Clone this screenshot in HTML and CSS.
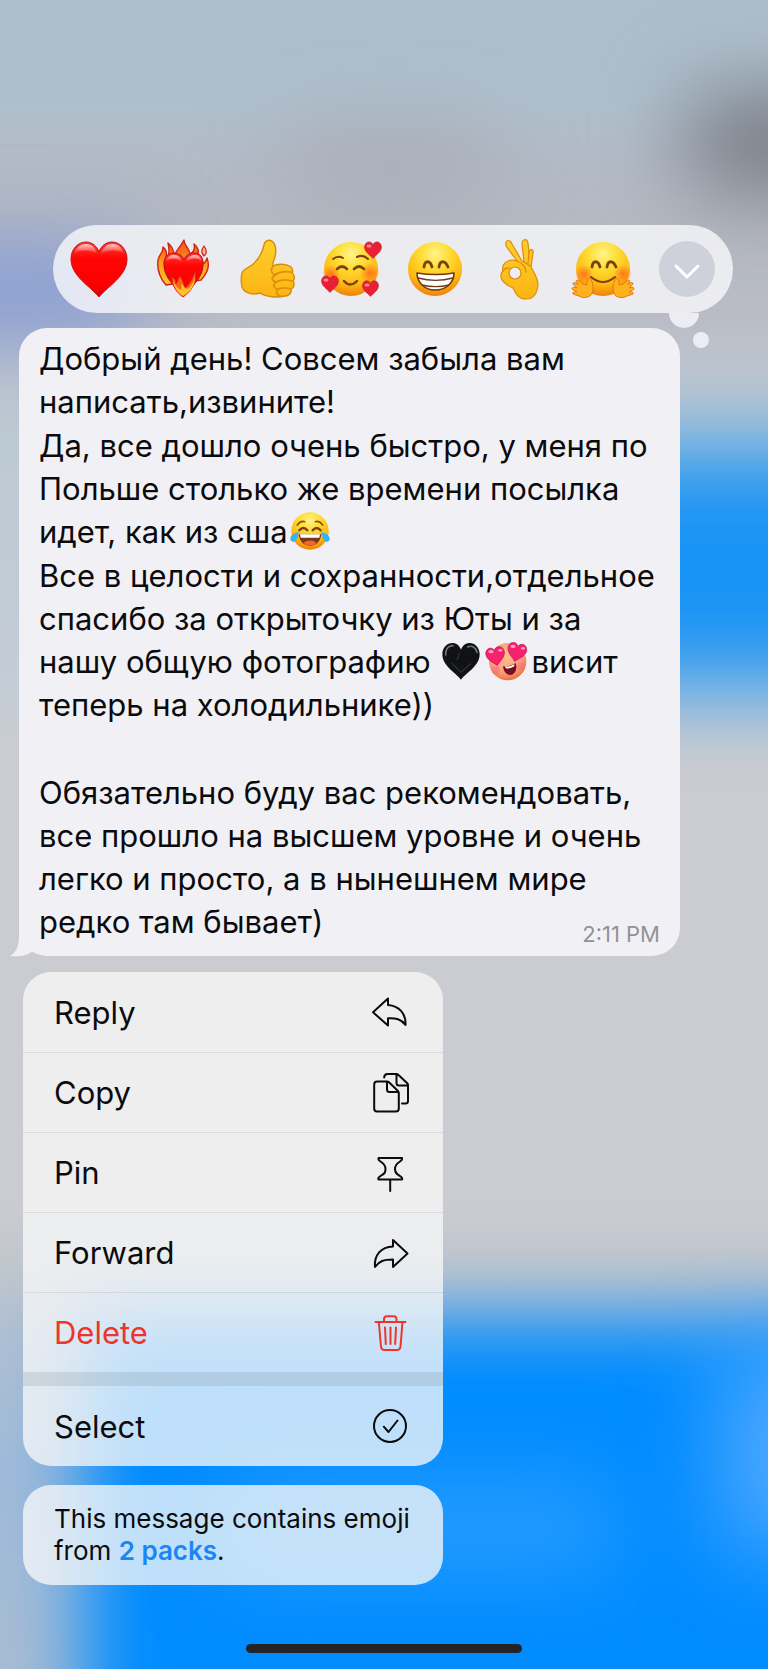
FILE: index.html
```html
<!DOCTYPE html>
<html lang="ru">
<head>
<meta charset="utf-8">
<meta name="viewport" content="width=device-width, initial-scale=1">
<title>Message actions</title>
<link rel="stylesheet" href="styles.css">
</head>
<body>
<svg class="defs" width="0" height="0" aria-hidden="true">
  <defs>
    <radialGradient id="face" cx="50%" cy="22%" r="80%">
      <stop offset="0" stop-color="#fff48a"/><stop offset=".35" stop-color="#ffdc33"/><stop offset=".72" stop-color="#fdb812"/><stop offset="1" stop-color="#ee7a0a"/>
    </radialGradient>
    <radialGradient id="blush"><stop offset="0" stop-color="#ff5a1e" stop-opacity=".75"/><stop offset="1" stop-color="#ff5a1e" stop-opacity="0"/></radialGradient>
    <linearGradient id="hand" x1="0" y1="0" x2="0" y2="1"><stop offset="0" stop-color="#ffd02c"/><stop offset="1" stop-color="#fbb413"/></linearGradient>
    <linearGradient id="red" x1="0" y1="0" x2="0" y2="1"><stop offset="0" stop-color="#ff3b35"/><stop offset=".3" stop-color="#ff0503"/><stop offset=".8" stop-color="#fb0000"/><stop offset="1" stop-color="#d50508"/></linearGradient>
    <linearGradient id="gloss" x1="0" y1="0" x2="0" y2="1"><stop offset="0" stop-color="#fff" stop-opacity=".75"/><stop offset="1" stop-color="#fff" stop-opacity="0"/></linearGradient>
    <linearGradient id="flame" x1="0" y1="0" x2="0" y2="1"><stop offset="0" stop-color="#f2491b"/><stop offset=".5" stop-color="#ff9b1d"/><stop offset="1" stop-color="#ffc928"/></linearGradient>
    <radialGradient id="pinkface" cx="45%" cy="35%" r="65%"><stop offset="0" stop-color="#ffc18c"/><stop offset=".7" stop-color="#fb9a7b"/><stop offset="1" stop-color="#e8743f"/></radialGradient>
    <symbol id="heart" viewBox="0 0 60 60">
      <path d="M30 58C21 47 2 37 2 20C2 10 9 3 17 3C23 3 28 7 30 13C32 7 37 3 43 3C51 3 58 10 58 20C58 37 39 47 30 58Z"/>
    </symbol>
  </defs>
</svg>

<main class="screen">
  <div class="backdrop" aria-hidden="true">
    <span class="blob sent-top"></span>
    <span class="blob sent-bottom"></span>
    <span class="blob glow-center"></span>
    <span class="blob glow-right"></span>
    <span class="blob shade-right"></span>
    <span class="blob shade-center"></span>
    <span class="blob tint-left"></span>
  </div>

  <div class="reactions">
    <button class="reaction" type="button" aria-label="Red heart">
      <svg class="emoji" viewBox="0 0 60 60">
        <path d="M30 58C21 47 2 37 2 20C2 10 9 3 17 3C23 3 28 7 30 13C32 7 37 3 43 3C51 3 58 10 58 20C58 37 39 47 30 58Z" fill="url(#red)" stroke="#c9151c" stroke-width="1"/>
        <path d="M5 15C7 8 12 5 17 5C23 5 27 9 28 15C22 11 12 10 5 15Z" fill="url(#gloss)"/>
        <path d="M32 15C33 9 38 5 43 5C49 5 53 8 55 15C48 10 38 11 32 15Z" fill="url(#gloss)"/>
      </svg>
    </button>
    <button class="reaction" type="button" aria-label="Heart on fire">
      <svg class="emoji" viewBox="0 0 60 60">
        <path d="M13 46C6 38 4 29 5 21C6 15 10 15 10 8C14 11 14 14 13 18C16 17 17 13 15 4C20 8 21 12 21 17C23 12 27 8 31 1C31 7 36 8 37 15C41 13 42 9 41 5C46 9 46 14 44 18C47 19 48 22 48 26C51 25 53 23 54 19C57 27 55 33 48 41Z" fill="url(#flame)" stroke="#ce2419" stroke-width="1.4" stroke-linejoin="round"/>
        <path d="M51 7C54 11 54 15 51 17C48 14 48 11 51 7Z" fill="#ffb09a" stroke="#ce2419" stroke-width="1.2"/>
        <path d="M30 58C24 48 12 41 11 27C10 19 15 14 20 14C26 14 30 17 31 21C32 17 36 14 42 14C48 14 51 20 50 27C49 41 37 48 30 58Z" fill="url(#red)" stroke="#b9131a" stroke-width="1"/>
        <path d="M13 22C15 17 18 16 21 16C26 16 28 19 29 23C24 19 18 19 13 22ZM33 23C34 18 38 16 42 16C46 16 48 19 49 22C43 18 38 19 33 23Z" fill="url(#gloss)"/>
        <path d="M30 58C25 54 19 49 19 38C22 40 23 42 23 45C25 43 25 40 27 37C30 41 30 45 32 49C36 46 39 41 42 33C44 41 41 50 30 58Z" fill="#f8661b" stroke="#df2b18" stroke-width="1"/>
        <path d="M30 57C24 53 21 48 20 42C23 48 26 50 28 51C29 49 28 46 29 44C31 49 33 51 36 49C39 46 41 42 42 38C42 46 38 52 30 57Z" fill="#ffc22d"/>
      </svg>
    </button>
    <button class="reaction" type="button" aria-label="Thumbs up">
      <svg class="emoji" viewBox="0 0 60 60">
        <path d="M5 34C6 30 11 29 15 26C20 22 25 15 27 6C28 1 33 0 36 3C40 7 39 13 38 18C37 21 35 25 36 27C41 24 50 25 54 28C56 30 56 33 55 34C58 36 58 40 56 42C58 45 57 49 54 50C55 54 52 57 48 57C40 59 29 58 23 54C16 56 8 55 5 48C4 43 4 38 5 34Z" fill="url(#hand)" stroke="#d98b08" stroke-width="1.4" stroke-linejoin="round"/>
        <path d="M36 27C33 31 34 35 39 36M54 33C48 32 40 33 37 37C34 39 35 42 39 43M55 42C49 40 41 41 38 44C35 47 38 50 41 50M54 50C48 48 41 49 40 52C39 55 41 57 44 57" fill="none" stroke="#dd8e0a" stroke-width="1.6" stroke-linecap="round"/>
      </svg>
    </button>
    <button class="reaction" type="button" aria-label="Smiling face with hearts">
      <svg class="emoji" viewBox="0 0 60 60">
        <circle cx="30" cy="30" r="27" fill="url(#face)"/>
        <circle cx="10" cy="35" r="9" fill="url(#blush)"/><circle cx="49" cy="34" r="10" fill="url(#blush)"/>
        <g fill="none" stroke="#7c4210" stroke-linecap="round">
          <path d="M12 20Q17 16 22 19M36 18Q42 15 47 20" stroke-width="2"/>
          <path d="M16 30Q21 25 26 30M33 30Q38 25 43 30" stroke-width="2.6"/>
          <path d="M23 42Q29 49 36 42" stroke-width="2.4"/>
        </g>
        <g fill="#ea1f35" stroke="#b3122a" stroke-width="2">
          <use href="#heart" x="43" y="2" width="18" height="18"/>
          <use href="#heart" x="0" y="36" width="18" height="18"/>
          <use href="#heart" x="41" y="41" width="17" height="17"/>
        </g>
        <g fill="#ff8790"><ellipse cx="48" cy="7" rx="2.5" ry="1.5"/><ellipse cx="5" cy="41" rx="2.5" ry="1.5"/><ellipse cx="46" cy="46" rx="2.5" ry="1.5"/></g>
      </svg>
    </button>
    <button class="reaction" type="button" aria-label="Grinning face with smiling eyes">
      <svg class="emoji" viewBox="0 0 60 60">
        <circle cx="30" cy="30" r="27" fill="url(#face)"/>
        <path d="M19 28C20 21 25 21 27 28M34 28C35 21 40 21 43 28" fill="none" stroke="#7c4210" stroke-width="2.8" stroke-linecap="round"/>
        <path d="M12 34C24 36 37 36 49 34C49 44 41 51 30 51C20 51 12 44 12 34Z" fill="#fff" stroke="#6e3a12" stroke-width="1.6" stroke-linejoin="round"/>
        <path d="M13 39C24 42 37 42 48 39M17 46C25 48 36 48 44 46" fill="none" stroke="#6e3a12" stroke-width="1.3"/>
      </svg>
    </button>
    <button class="reaction" type="button" aria-label="OK hand">
      <svg class="emoji" viewBox="0 0 60 60">
        <path d="M17 3C19 0 22 2 23 5L33 22L35 23L33 5C33 0 38 -1 39 4L40 14C41 9 45 10 44 14L42 28C45 34 49 39 49 46C48 55 45 60 37 60C29 60 27 55 24 49C17 46 11 41 12 36C12 34 13 33 14 32C12 24 20 19 28 22L17 7Z" fill="url(#hand)" stroke="#e08a0a" stroke-width="1.2" stroke-linejoin="round"/>
        <circle cx="26" cy="34" r="6" fill="#edeef2" stroke="#e08a0a" stroke-width="1.2"/>
        <path d="M14 32C15 30 17 29 20 29M35 23L41 27M40 14L39 24M28 22C34 24 37 29 37 33" fill="none" stroke="#e08a0a" stroke-width="1.3" stroke-linecap="round"/>
      </svg>
    </button>
    <button class="reaction" type="button" aria-label="Hugging face">
      <svg class="emoji" viewBox="0 0 60 60">
        <circle cx="30" cy="30" r="27" fill="url(#face)"/>
        <circle cx="11" cy="35" r="9" fill="url(#blush)"/><circle cx="50" cy="35" r="9" fill="url(#blush)"/>
        <path d="M19 28C20 21 25 21 27 28M34 28C35 21 40 21 43 28" fill="none" stroke="#7c4210" stroke-width="2.8" stroke-linecap="round"/>
        <path d="M18 38Q30 48 42 38" fill="none" stroke="#7c4210" stroke-width="2" stroke-linecap="round"/>
        <g fill="#ffb21d" stroke="#e5780b" stroke-width="1" stroke-linejoin="round">
          <path id="hug" d="M17 57C13 59 9 59 6 57L0 55C-1 53 1 53 4 53L-1 50C-1 48 1 48 4 49L0 45C0 43 2 43 5 46L3 42C4 40 6 42 10 45L14 46C14 42 14 39 17 39C20 42 22 53 17 57Z"/>
          <use href="#hug" transform="matrix(-1 0 0 1 60 0)"/>
        </g>
      </svg>
    </button>
    <button class="reaction" type="button" aria-label="More reactions">
      <svg class="more" viewBox="0 0 56 56"><circle cx="28" cy="28" r="28" fill="#cfd1da"/><path d="M17 25L28 36L39 25" fill="none" stroke="#fff" stroke-width="3" stroke-linecap="round" stroke-linejoin="round"/></svg>
    </button>
    <span class="bubble-large"></span>
    <span class="bubble-small"></span>
  </div>

  <article class="message">
    <div class="message-text">
      <p>Добрый день! Совсем забыла вам<br>написать,извините!</p>
      <p>Да, все дошло очень быстро, у меня по<br>Польше столько же времени посылка<br>идет, как из сша<svg class="inline-emoji" viewBox="0 0 60 60" role="img" aria-label="Tears of joy">
        <circle cx="30" cy="30" r="28" fill="url(#face)"/>
        <path d="M11 21Q16 14 22 16M38 16Q44 14 49 21" fill="none" stroke="#85500f" stroke-width="2.500" stroke-linecap="round"/>
        <path d="M14 29Q20 22 26 29M34 29Q40 22 46 29" fill="none" stroke="#7c4210" stroke-width="3.500" stroke-linecap="round"/>
        <path d="M13 35H47C46 46 39 52 30 52S14 46 13 35Z" fill="#7a3814"/>
        <path d="M15 35H45L44 40H16Z" fill="#fff"/><path d="M20 48C25 43 35 43 40 48C34 53 26 53 20 48Z" fill="#f2652b"/>
        <path d="M13 31C3 34-1 39 1 44C4 49 12 46 13 31ZM47 31C57 34 61 39 59 44C56 49 48 46 47 31Z" fill="#35b4f2"/>
      </svg></p>
      <p>Все в целости и сохранности,отдельное<br>спасибо за открыточку из Юты и за<br>нашу общую фотографию <svg class="inline-emoji" viewBox="0 0 60 60" role="img" aria-label="Black heart">
        <use href="#heart" width="60" height="60" fill="#111214"/>
        <path d="M7 21C6 13 11 7 18 7M40 9C46 6 52 9 54 17" fill="none" stroke="#70757b" stroke-width="2.500" stroke-linecap="round"/>
        <path d="M16 33L30 47L44 34M28 18L24 28" fill="none" stroke="#2b2e33" stroke-width="2" stroke-linecap="round"/>
      </svg><svg class="inline-emoji wide" viewBox="0 0 66 60" role="img" aria-label="Heart eyes">
        <circle cx="34" cy="31" r="28" fill="url(#pinkface)"/>
        <circle cx="16" cy="44" r="6" fill="#f7667b" opacity=".5"/><circle cx="54" cy="38" r="6" fill="#f7667b" opacity=".5"/>
        <path d="M27 38Q38 39 46 33C49 43 45 50 38 51C32 51 28 46 27 38Z" fill="#74101e"/><path d="M30 38Q38 39 44 35L44 38Q38 42 31 41Z" fill="#fff"/>
        <g fill="#f7216e" stroke="#bd0e4e" stroke-width="2"><use href="#heart" x="1" y="8" width="30" height="30" transform="rotate(-10 16 23)"/><use href="#heart" x="31" y="2" width="33" height="30" transform="rotate(12 48 17)"/></g>
        <g fill="#ff9fc1"><ellipse cx="9" cy="16" rx="4" ry="2.500"/><ellipse cx="23" cy="14" rx="3" ry="2"/><ellipse cx="42" cy="8" rx="4" ry="2.500"/><ellipse cx="57" cy="11" rx="3" ry="2"/></g>
      </svg>висит<br>теперь на холодильнике))</p>
      <p><br></p>
      <p>Обязательно буду вас рекомендовать,<br>все прошло на высшем уровне и очень<br>легко и просто, а в нынешнем мире<br>редко там бывает)</p>
    </div>
    <time class="message-time">2:11 PM</time>
    <svg class="tail" viewBox="0 0 24 30" aria-hidden="true"><path d="M9 0V8C9 19 6 24 0 28C8 29 17 28 22 23.500L24 12Z" fill="#f1f1f5"/></svg>
  </article>

  <nav class="menu" aria-label="Message">
    <button class="item" type="button">Reply
      <svg class="icon" viewBox="0 0 40 40"><path d="M3 20.300L18 6.500V13C29 14 36 21 35.500 33C31 27 26 26 18 26.300V33.500Z"/></svg>
    </button>
    <button class="item" type="button">Copy
      <svg class="icon" viewBox="0 0 40 40"><path d="M17 8.500H7Q4.200 8.500 4.200 11.500V35.500Q4.200 38.500 7 38.500H26Q28.800 38.500 28.800 35.500V20Q28.800 19 28 18L19 9.300Q18 8.500 17 8.500V16.500Q17 19 19.500 19H28.500M14.200 4.500Q14.200 1 17.500 1H26.500Q27.500 1 28.500 2L37 10Q38 11 38 12V28Q38 30.500 35.500 30.500H32M26.500 1V10Q26.500 12.500 29 12.500H37.500"/></svg>
    </button>
    <button class="item" type="button">Pin
      <svg class="icon" viewBox="0 0 40 40"><path d="M8.500 5H32Q32.500 7 30 8.500C26 11 25 13 25 16C25 20 27 21 30 23Q33 25 32 26.500H8.500Q7.500 25 10.500 23C14 21 15.500 20 15.500 16C15.500 13 14.500 11 10.500 8.500Q8 7 8.500 5ZM20.200 26.500V38"/></svg>
    </button>
    <button class="item" type="button">Forward
      <svg class="icon" viewBox="0 0 40 40"><path d="M37.500 20.500L23 7V13.500C11 14 4 22 5 34C9 28 14 26.500 23 26.500V34Z"/></svg>
    </button>
    <button class="item danger" type="button">Delete
      <svg class="icon" viewBox="0 0 40 40"><path d="M5.500 9H35.500M14 8.500V6Q14 3.200 17 3.200H23.500Q26.500 3.200 26.500 6V8.500M8.800 9L11 33.500Q11.300 37 14.500 37H27Q30.200 37 30.500 33.500L32.500 9M15 14.500L15.800 31M20.500 14.500V31M26 14.500L25.200 31"/></svg>
    </button>
    <div class="divider"></div>
    <button class="item" type="button">Select
      <svg class="icon" viewBox="0 0 40 40"><circle cx="20" cy="20" r="16"/><path d="M13.800 20.700L18.500 26L27.500 14.500"/></svg>
    </button>
  </nav>

  <p class="note">This message contains emoji from <a href="#packs">2 packs</a>.</p>

  <div class="home-indicator"></div>
</main>
</body>
</html>
```
FILE: styles.css
```css
* {
  box-sizing: border-box;
}

body {
  margin: 0;
  font-family: Inter, "Noto Sans", sans-serif;
  font-size: 31px;
  color: #0b0b0d;
}

p {
  margin: 0;
}

button {
  border: 0;
  padding: 0;
  background: none;
  font: inherit;
  color: inherit;
  cursor: pointer;
}

.defs {
  position: absolute;
}

.screen {
  position: relative;
  z-index: 0;
  display: flex;
  flex-direction: column;
  align-items: flex-start;
  min-height: 100vh;
  padding: 225px 0 16px;
}

/* Blurred chat behind the open menu */
.backdrop {
  position: absolute;
  inset: 0;
  z-index: -1;
  overflow: hidden;
  background: linear-gradient(180deg, #adbecb 0, #aebfcc 6%, #b2bbc7 9%, #b5b9c2 13%, #b9bcc5 19%, #bec5ce 22%, #bccad2 26%, #c3ccd6 40%, #cbccd1 46%, #cbccd1 72%, #c0c6cd 76%, #aebfd2 80%, #9fbad9 88%, #a8bcd3 100%);
}

.blob {
  position: absolute;
  filter: blur(44px);
}

.sent-top {
  top: 27%;
  right: -20%;
  width: 70%;
  height: 14%;
  background: #1893f6;
}

.sent-bottom {
  top: 79%;
  right: -18%;
  bottom: -8%;
  left: 11%;
  background: #008cff;
  filter: blur(36px);
}

.glow-center {
  top: 89%;
  left: 30%;
  width: 50%;
  height: 5%;
  background: #2b9eff;
}

.glow-right {
  top: 81%;
  right: -14%;
  width: 20%;
  height: 12%;
  background: #4ea8ff;
}

.shade-right {
  top: 6%;
  right: -12%;
  width: 22%;
  height: 5%;
  background: #6d6e75;
}

.shade-center {
  top: 8%;
  left: 38%;
  width: 26%;
  height: 4%;
  background: #a7a9b3;
}

.tint-left {
  top: 15%;
  left: -14%;
  width: 32%;
  height: 5%;
  background: #7f98d8;
}

.reactions {
  position: relative;
  display: grid;
  grid-template-columns: repeat(8, 1fr);
  align-self: stretch;
  height: 88px;
  margin: 0 35px 0 53px;
  padding: 0 4px;
  border-radius: 44px;
  background: rgba(249, 249, 251, .8);
}

.reaction {
  display: grid;
  place-items: center;
}

.emoji {
  width: 60px;
  height: 60px;
  overflow: visible;
}

.more {
  width: 56px;
  height: 56px;
}

.bubble-large,
.bubble-small {
  position: absolute;
  background: #ebedf2;
}

.bubble-large {
  top: 88px;
  right: 34px;
  width: 30px;
  height: 15px;
  border-radius: 0 0 15px 15px;
}

.bubble-small {
  top: 107px;
  right: 24px;
  width: 16px;
  height: 16px;
  border-radius: 50%;
}

.message {
  position: relative;
  display: grid;
  align-self: stretch;
  margin: 15px 88px 0 19px;
  padding: 9px 20px 13px;
  border-radius: 28px;
  background: #f1f1f5;
}

.message-text,
.message-time {
  grid-area: 1 / 1;
}

.message-text {
  display: flex;
  flex-direction: column;
  gap: 1px;
  line-height: 43px;
}

.message-time {
  align-self: end;
  justify-self: end;
  font-size: 22px;
  line-height: 18px;
  color: #929296;
}

.inline-emoji {
  width: 40px;
  height: 40px;
  margin: 0 2px;
  vertical-align: -8px;
}

.inline-emoji.wide {
  width: 44px;
}

.tail {
  position: absolute;
  left: -9px;
  bottom: -2px;
  width: 24px;
  height: 30px;
}

.menu,
.note {
  width: calc(100% - 48px);
  max-width: 420px;
  margin-left: 23px;
  border-radius: 28px;
  background: rgba(249, 249, 249, .77);
}

.menu {
  display: flex;
  flex-direction: column;
  margin-top: 16px;
  overflow: hidden;
}

.item {
  display: flex;
  align-items: center;
  justify-content: space-between;
  height: 80px;
  padding: 0 33px 0 31px;
  text-align: left;
}

.item + .item {
  border-top: 1px solid rgba(60, 70, 90, .12);
}

.icon {
  width: 40px;
  height: 40px;
  fill: none;
  stroke: currentColor;
  stroke-width: 2;
  stroke-linecap: round;
  stroke-linejoin: round;
  overflow: visible;
}

.danger {
  color: #ee352c;
}

.divider {
  height: 14px;
  background: rgba(80, 90, 100, .14);
}

.note {
  margin-top: 19px;
  padding: 18px 31px;
  font-size: 26px;
  line-height: 32px;
}

.note a {
  color: #1a86f5;
  font-weight: 600;
  text-decoration: none;
}

.home-indicator {
  align-self: center;
  width: 36%;
  height: 9px;
  margin-top: auto;
  border-radius: 5px;
  background: #242427;
}
```
